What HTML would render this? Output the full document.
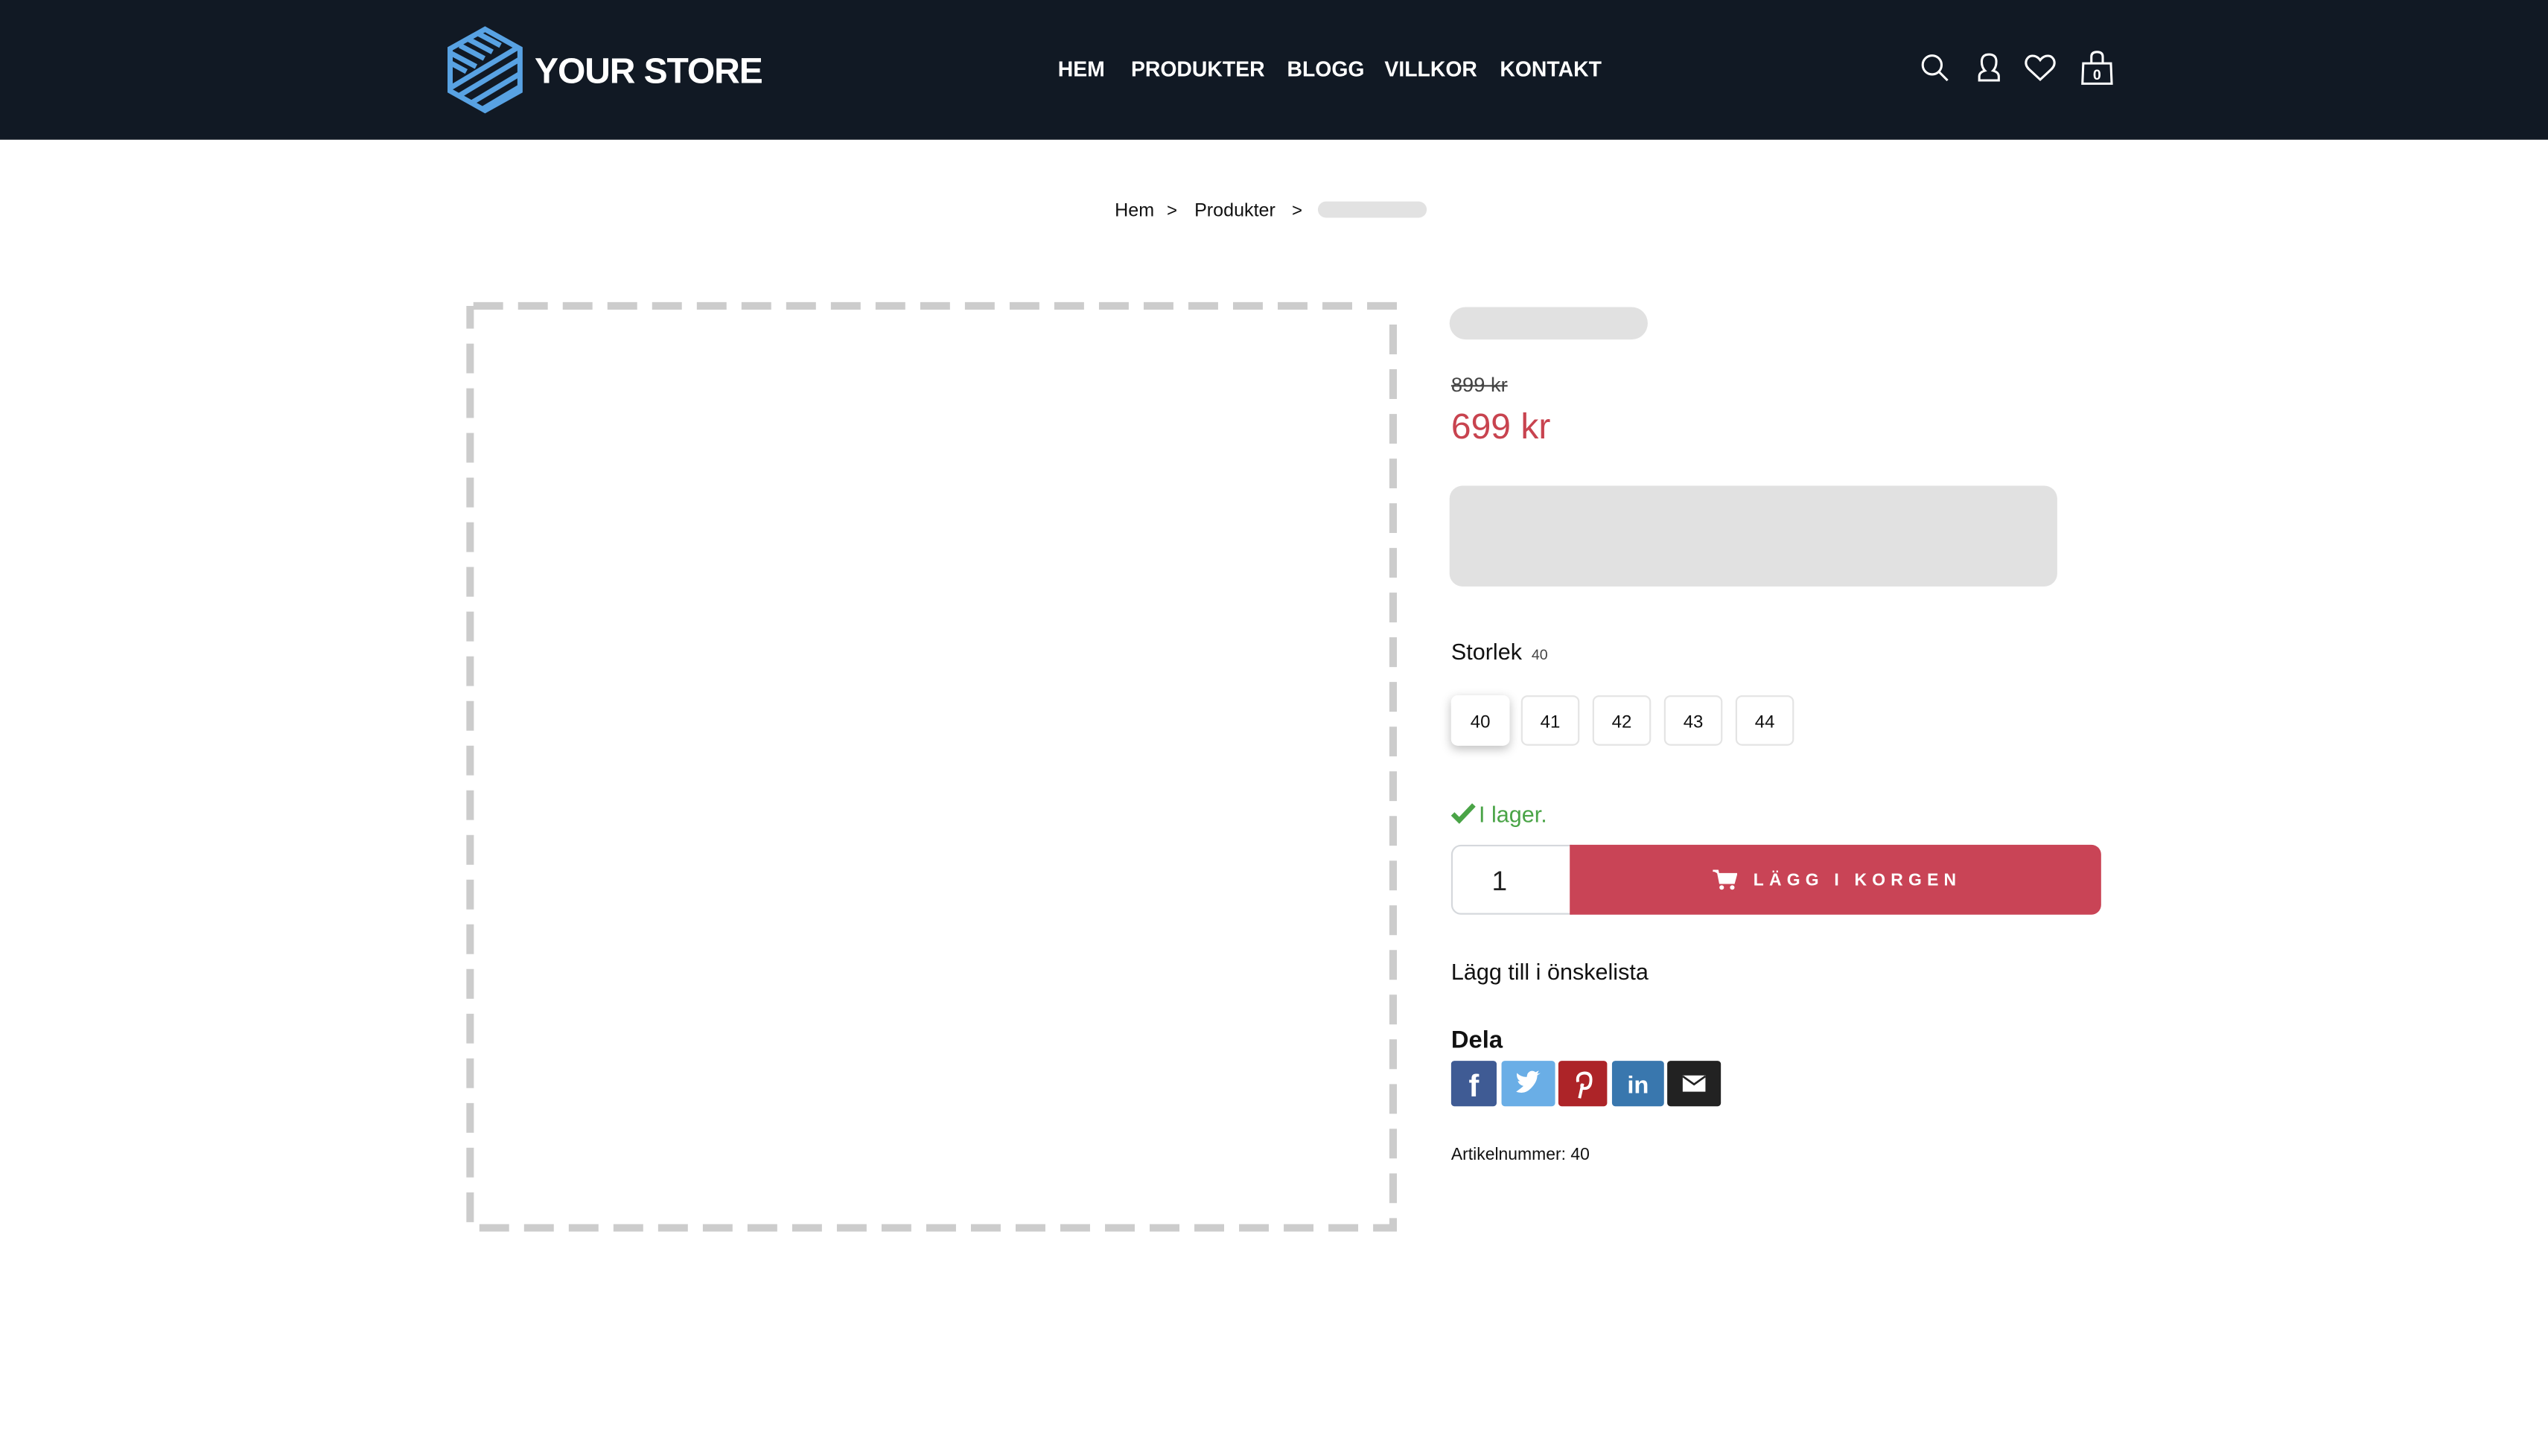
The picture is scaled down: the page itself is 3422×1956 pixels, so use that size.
<!DOCTYPE html>
<html><head><meta charset="utf-8">
<style>
html,body{margin:0;padding:0;background:#fff;overflow:hidden;width:3422px;height:1956px}
#w{position:absolute;left:0;top:0;width:1568px;height:896px;transform:scale(2.18240);transform-origin:0 0;font-family:"Liberation Sans",sans-serif;color:#111}
.a{position:absolute;white-space:nowrap}
header{position:absolute;left:0;top:0;width:1568px;height:85.5px;background:#111924}
.nav{font-weight:bold;font-size:13px;color:#fff;top:35px}
.sz{position:absolute;top:428px;border:1px solid #e4e4e4;border-radius:4px;font-size:11px;text-align:center;line-height:32px;box-sizing:border-box;width:36px;height:31px}
.sb{position:absolute;top:653px;height:28px;border-radius:2px}
</style></head><body><div id="w">
<header>
<svg class="a" style="left:274px;top:15px" width="49" height="56" viewBox="0 0 49 56">
<defs><clipPath id="c"><polygon points="24.5,3 46,15 46,41 24.5,53 3,41 3,15"/></clipPath></defs>
<polygon points="24.5,3 46,15 46,41 24.5,53 3,41 3,15" fill="none" stroke="#58a2e3" stroke-width="3.2"/>
<g clip-path="url(#c)" stroke="#58a2e3" stroke-width="3.2">
<line x1="-5" y1="44" x2="55" y2="8"/><line x1="-5" y1="52" x2="55" y2="16"/><line x1="0" y1="58" x2="55" y2="25"/><line x1="8" y1="61" x2="55" y2="33"/>
<line x1="14" y1="9" x2="29" y2="17"/><line x1="9" y1="13" x2="24" y2="21"/><line x1="4" y1="18" x2="19" y2="26"/><line x1="0" y1="22" x2="13" y2="29"/><line x1="19" y1="5" x2="34" y2="13"/>
</g></svg>
<div class="a" style="left:329px;top:31px;font-size:22px;font-weight:bold;color:#fff;letter-spacing:-0.5px">YOUR STORE</div>
<div class="a nav" style="left:651px">HEM</div>
<div class="a nav" style="left:696px">PRODUKTER</div>
<div class="a nav" style="left:792px">BLOGG</div>
<div class="a nav" style="left:852px">VILLKOR</div>
<div class="a nav" style="left:923px">KONTAKT</div>
<svg class="a" style="left:1180px;top:30px" width="125" height="24" viewBox="0 0 125 24" fill="none" stroke="#fff" stroke-width="1.4">
<circle cx="9" cy="10" r="5.8"/><line x1="13.2" y1="14.2" x2="18.5" y2="19.5"/>
<path d="M38 19.5 L38 17 Q38 14.5 41.5 13.5 Q39.5 11.5 39.5 8 Q39.5 3.5 44 3.5 Q48.5 3.5 48.5 8 Q48.5 11.5 46.5 13.5 Q50 14.5 50 17 L50 19.5 Z"/>
<path d="M75.5 19 L68.5 12.5 Q66 10 67 7 Q68.5 3.8 72 4.5 Q74 5 75.5 7 Q77 5 79 4.5 Q82.5 3.8 84 7 Q85 10 82.5 12.5 Z"/>
<path d="M102 9 L119 9 L119.5 21.5 L101.5 21.5 Z"/><path d="M107 9 L107 5 Q107 2 110.5 2 Q114 2 114 5 L114 9"/>
<text x="110.5" y="19" font-size="9" font-weight="bold" fill="#fff" stroke="none" text-anchor="middle" font-family="Liberation Sans">0</text>
</svg>
</header>
<div class="a" style="left:686px;top:123.5px;font-size:11.5px">Hem</div>
<div class="a" style="left:718px;top:123.5px;font-size:11px">&gt;</div>
<div class="a" style="left:735px;top:123.5px;font-size:11.5px">Produkter</div>
<div class="a" style="left:795px;top:123.5px;font-size:11px">&gt;</div>
<div class="a" style="left:811px;top:124px;width:67px;height:10px;border-radius:5px;background:#e2e2e2"></div>
<svg class="a" style="left:285px;top:184px" width="578" height="578">
<rect x="4.3" y="4.3" width="568" height="567.5" fill="none" stroke="#cccccc" stroke-width="4.6" stroke-dasharray="18.3 9.2" stroke-dashoffset="-2"/>
</svg>
<div class="a" style="left:892px;top:189px;width:122px;height:20px;border-radius:10px;background:#e1e1e1"></div>
<div class="a" style="left:893px;top:229.5px;font-size:12.5px;color:#444;text-decoration:line-through">899 kr</div>
<div class="a" style="left:893px;top:249.5px;font-size:22px;color:#c8434f">699 kr</div>
<div class="a" style="left:892px;top:299px;width:374px;height:62px;border-radius:8px;background:#e1e1e1"></div>
<div class="a" style="left:893px;top:392.5px;font-size:14px">Storlek <span style="font-size:9px;color:#444;margin-left:2px">40</span></div>
<div class="sz" style="left:893px;border-color:#fff;box-shadow:0 2px 6px rgba(0,0,0,.25)">40</div>
<div class="sz" style="left:936px">41</div>
<div class="sz" style="left:980px">42</div>
<div class="sz" style="left:1024px">43</div>
<div class="sz" style="left:1068px">44</div>
<svg class="a" style="left:893px;top:494px" width="15" height="13" viewBox="0 0 15 13"><path d="M1 7 L5 11 L14 1.5" stroke="#4aa447" stroke-width="3" fill="none"/></svg>
<div class="a" style="left:910px;top:493px;font-size:14px;color:#4aa447">I lager.</div>
<div class="a" style="left:893px;top:520px;width:80px;height:43px;border:1px solid #d5d8dc;border-radius:6px;box-sizing:border-box"></div>
<div class="a" style="left:918px;top:533px;font-size:17px;color:#222">1</div>
<div class="a" style="left:966px;top:520px;width:327px;height:43px;background:#c94456;border-radius:0 6px 6px 0"></div>
<svg class="a" style="left:1054px;top:535px" width="15" height="13" viewBox="0 0 15 13"><path d="M0 1 L3 1 L4.5 8.5 L13 8.5 L14.5 3 L3.5 3" fill="#fff" stroke="#fff" stroke-width="1.2"/><circle cx="5.5" cy="11.3" r="1.4" fill="#fff"/><circle cx="12" cy="11.3" r="1.4" fill="#fff"/></svg>
<div class="a" style="left:1079px;top:536px;font-size:10.5px;font-weight:bold;color:#fff;letter-spacing:3.3px">LÄGG I KORGEN</div>
<div class="a" style="left:893px;top:590px;font-size:14px">Lägg till i önskelista</div>
<div class="a" style="left:893px;top:631.5px;font-size:15px;font-weight:bold">Dela</div>
<div class="sb" style="left:893px;width:28px;background:#3f5b94"><svg width="28" height="28"><text x="14" y="22" font-size="19" font-weight="bold" fill="#fff" text-anchor="middle" font-family="Liberation Sans">f</text></svg></div>
<div class="sb" style="left:924px;width:33px;background:#6aaee6"><svg width="33" height="28" viewBox="0 0 33 28"><path d="M9 19 Q14 21 18 17 Q22 13 22 9 L24 7.5 L22 8 L23 6 L21 7 Q18 5 16 8 L15.5 10 Q12 10 9.5 7.5 Q9 11 11.5 12.5 L10 12.5 Q11 15 13.5 15.5 Q12 17 9 19 Z" fill="#fff"/></svg></div>
<div class="sb" style="left:959px;width:30px;background:#ad2428"><svg width="30" height="28" viewBox="0 0 30 28"><path d="M13 23 L15 14 M12 13 Q11 8 16 7.5 Q20 7.5 20 11.5 Q20 17 16 17 Q14 17 14.5 14.5" stroke="#fff" stroke-width="1.8" fill="none"/></svg></div>
<div class="sb" style="left:992px;width:32px;background:#3977ae"><svg width="32" height="28"><text x="16" y="20" font-size="15" font-weight="bold" fill="#fff" text-anchor="middle" font-family="Liberation Sans">in</text></svg></div>
<div class="sb" style="left:1026px;width:33px;background:#222"><svg width="33" height="28" viewBox="0 0 33 28"><rect x="9.5" y="9" width="14" height="10" fill="#fff"/><path d="M9.5 9.5 L16.5 14.5 L23.5 9.5" stroke="#222" stroke-width="1.2" fill="none"/></svg></div>
<div class="a" style="left:893px;top:704.5px;font-size:10.5px">Artikelnummer: 40</div>
</div></body></html>
